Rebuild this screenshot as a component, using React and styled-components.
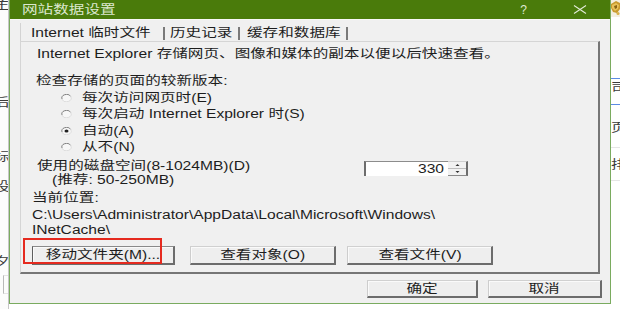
import React from "react";
import styled, { createGlobalStyle } from "styled-components";

const SX = 1.3;

const GlobalStyle = createGlobalStyle`
  html, body { margin: 0; padding: 0; background: #ffffff; }
  body {
    font-family: "Liberation Sans", "Noto Sans CJK SC", sans-serif;
    font-size: 12px;
    color: #1d1d1d;
  }
`;

const Screen = styled.div`
  display: flex;
  width: 620px;
  height: 309px;
  overflow: hidden;
  background: #ffffff;
`;

const Stretch = styled.span`
  display: inline-block;
  white-space: nowrap;
  line-height: 14px;
  transform: scaleX(${SX});
  transform-origin: ${(p) => p.$origin || "left"} center;
`;

/* ---------- background page edges ---------- */
const LeftStrip = styled.div`
  flex: none;
  width: 8px;
  border-right: 1px solid #c6c6c6;
  overflow: hidden;
  display: flex;
  flex-direction: column;
  background: #fcfcfc;
`;

const EdgeGlyph = styled.div`
  flex: none;
  height: 14px;
  line-height: 14px;
  font-size: 12px;
  color: #3a3a3a;
  margin-top: ${(p) => p.$mt}px;
  margin-left: ${(p) => p.$ml ?? 0}px;
  white-space: nowrap;
`;

const EdgeBox = styled.div`
  flex: none;
  margin-top: ${(p) => p.$mt}px;
  margin-left: 3px;
  height: 17px;
  border-left: 1px solid #b9b9b9;
  border-top: 1px solid #e4e4e4;
  border-bottom: 1px solid #e4e4e4;
`;

const RightStrip = styled.div`
  flex: none;
  width: 9px;
  overflow: hidden;
  display: flex;
  flex-direction: column;
  background: #ffffff;
`;

const EdgeRule = styled.div`
  flex: none;
  height: ${(p) => p.$h ?? 1}px;
  margin-top: ${(p) => p.$mt}px;
  background: ${(p) => p.$color};
`;

/* ---------- dialog ---------- */
const Dialog = styled.div`
  flex: none;
  width: 602px;
  height: 304px;
  box-sizing: border-box;
  display: flex;
  flex-direction: column;
  background: #f0f0f0;
  border: 1px solid #7aab5f;
  border-top: none;
`;

const TitleBar = styled.div`
  flex: none;
  height: 19px;
  display: flex;
  align-items: center;
  padding: 0 23px 0 12px;
  background: #4a7b0b;
  color: #dce8cf;
  font-size: 12px;
`;

const TitleSpacer = styled.div`
  flex: 1;
`;

const HelpMark = styled.span`
  font-size: 12px;
  color: #dfe9d3;
  margin-right: 46px;
`;

const Body = styled.div`
  flex: 1;
  display: flex;
  flex-direction: column;
  padding: 3px 10px 0 10px;
  border-top: 1px solid #f8f8f8;
`;

const TabRow = styled.div`
  flex: none;
  height: 18px;
  display: flex;
  align-items: flex-end;
`;

const Tab = styled.div`
  box-sizing: border-box;
  width: ${(p) => p.$w}px;
  height: 18px;
  padding: 2px 0 0 ${(p) => p.$pl}px;
  display: flex;
  align-items: center;
  border-left: ${(p) => (p.$active ? "1px solid #d3d3d3" : "none")};
`;

const TabSep = styled.div`
  flex: none;
  width: 2px;
  height: 13px;
  margin-bottom: 1px;
  background: #7a7a7a;
`;

const Panel = styled.div`
  position: relative;
  flex: none;
  height: 233px;
  box-sizing: border-box;
  display: flex;
  flex-direction: column;
  border-top: 1px solid #d5d5d5;
  border-left: 1px solid #d5d5d5;
  border-right: 2px solid #767676;
  border-bottom: 2px solid #767676;
`;

const Line = styled.div`
  flex: none;
  display: flex;
  align-items: center;
  gap: ${(p) => p.$gap ?? 0}px;
  height: ${(p) => p.$h ?? 16}px;
  margin-top: ${(p) => p.$mt ?? 0}px;
  padding-left: ${(p) => p.$pl ?? 0}px;
`;

const DiskRow = styled.div`
  flex: none;
  display: flex;
  align-items: flex-start;
  margin-top: 4px;
  padding-left: 16px;
`;

const DiskLabels = styled.div`
  width: 327px;
  display: flex;
  flex-direction: column;
`;

const SpinBox = styled.div`
  display: flex;
  margin-top: 2px;
`;

const SpinInput = styled.div`
  box-sizing: border-box;
  width: 84px;
  height: 15px;
  display: flex;
  align-items: center;
  justify-content: flex-end;
  padding-right: 4px;
  background: #ffffff;
  border-left: 2px solid #6d6d6d;
  border-top: 1px solid #8c8c8c;
  font-size: 12px;
`;

const Spinner = styled.div`
  box-sizing: border-box;
  width: 20px;
  height: 15px;
  display: flex;
  flex-direction: column;
  background: #f2f2f2;
  border-top: 1px solid #d0d0d0;
  border-right: 2px solid #6d6d6d;
  border-bottom: 1px solid #8a8a8a;
`;

const SpinHalf = styled.div`
  flex: 1;
  display: flex;
  align-items: center;
  justify-content: center;
  border-bottom: ${(p) => (p.$top ? "1px solid #bdbdbd" : "none")};
`;

const PathBlock = styled.div`
  flex: none;
  margin-top: 2px;
  padding-left: 11px;
  display: flex;
  flex-direction: column;
`;

const PathLine = styled.div`
  height: 15px;
  display: flex;
  align-items: center;
`;

const Btn = styled.div`
  flex: none;
  box-sizing: border-box;
  width: ${(p) => p.$w}px;
  height: ${(p) => p.$h ?? 19}px;
  margin-left: ${(p) => p.$ml ?? 0}px;
  display: flex;
  align-items: center;
  justify-content: center;
  background: #eeeeee;
  border-top: 1px solid ${(p) => (p.$focus ? "#8a8a8a" : "#d0d0d0")};
  border-left: 1px solid ${(p) => (p.$focus ? "#5e5e5e" : "#cdcdcd")};
  border-right: 2px solid #6c6c6c;
  border-bottom: 2px solid #6c6c6c;
  box-shadow: inset 1px 1px 0 #fafafa;
  font-size: 12px;
`;

const Highlight = styled.div`
  position: absolute;
  left: 2px;
  top: 196px;
  width: 139px;
  height: 26px;
  box-sizing: border-box;
  border: 2px solid #e52a1f;
  pointer-events: none;
`;

const Footer = styled.div`
  flex: none;
  display: flex;
  justify-content: flex-end;
  gap: 10px;
  margin-top: 6px;
  margin-right: -2px;
`;

const Radio = ({ checked }) => (
  <svg width="11" height="8" viewBox="0 0 11 8" style={{ flex: "none" }}>
    <ellipse cx="5.5" cy="4" rx="4.6" ry="3.3" fill="#f7f7f7" />
    <path d="M1.2 5.2 A4.6 3.3 0 0 1 9.6 2.4" fill="none" stroke="#7f7f7f" strokeWidth="1" />
    <path d="M9.8 2.9 A4.6 3.3 0 0 1 1.4 5.8" fill="none" stroke="#dcdcdc" strokeWidth="1" />
    {checked && <ellipse cx="5.5" cy="4" rx="2" ry="1.5" fill="#222" />}
  </svg>
);

const CloseIcon = () => (
  <svg width="14" height="9" viewBox="0 0 14 9">
    <path d="M1 0.5 L13 8.5 M13 0.5 L1 8.5" stroke="#e2ead8" strokeWidth="1.1" fill="none" />
  </svg>
);

const Arrow = ({ down }) => (
  <svg width="7" height="4" viewBox="0 0 7 4">
    {down ? <path d="M1.5 1 L5.5 1 L3.5 3 Z" fill="#333" /> : <path d="M1.5 3 L5.5 3 L3.5 1 Z" fill="#333" />}
  </svg>
);

const GoldThumb = () => (
  <svg width="9" height="17" viewBox="0 0 9 17">
    <rect width="9" height="17" fill="#f4efe2" />
    <path d="M0 4 L5 1 L9 3 L9 9 L6 13 L2 12 L0 8 Z" fill="#c99a2e" />
    <path d="M1 5 L5 3 L8 5 L7 9 L4 11 L1 8 Z" fill="#e8c25a" />
    <path d="M3 6 L6 5 L6 8 L4 9 Z" fill="#8a6414" />
    <circle cx="7" cy="13.5" r="1.5" fill="#d8b04a" />
  </svg>
);

export default function App() {
  return (
    <>
      <GlobalStyle />
      <Screen>
        <LeftStrip>
          <EdgeGlyph $mt={-2} $ml={-6}><Stretch>主</Stretch></EdgeGlyph>
          <EdgeGlyph $mt={84} $ml={-6}><Stretch>后</Stretch></EdgeGlyph>
          <EdgeGlyph $mt={40} $ml={-6}><Stretch>标</Stretch></EdgeGlyph>
          <EdgeGlyph $mt={16} $ml={-6}><Stretch>设</Stretch></EdgeGlyph>
          <EdgeGlyph $mt={61} $ml={-6}><Stretch>夕</Stretch></EdgeGlyph>
          <EdgeBox $mt={6} />
        </LeftStrip>

        <Dialog>
          <TitleBar>
            <Stretch>网站数据设置</Stretch>
            <TitleSpacer />
            <HelpMark>?</HelpMark>
            <CloseIcon />
          </TitleBar>

          <Body>
            <TabRow>
              <Tab $w={143} $pl={10} $active><Stretch>Internet 临时文件</Stretch></Tab>
              <TabSep />
              <Tab $w={73} $pl={5}><Stretch>历史记录</Stretch></Tab>
              <TabSep />
              <Tab $w={106} $pl={7}><Stretch>缓存和数据库</Stretch></Tab>
              <TabSep />
            </TabRow>

            <Panel>
              <Line $mt={4} $pl={16}>
                <Stretch>Internet Explorer 存储网页、图像和媒体的副本以便以后快速查看。</Stretch>
              </Line>
              <Line $mt={11} $pl={15}>
                <Stretch>检查存储的页面的较新版本:</Stretch>
              </Line>
              <Line $mt={1} $pl={40} $gap={10}>
                <Radio /><Stretch>每次访问网页时(E)</Stretch>
              </Line>
              <Line $mt={0} $pl={40} $gap={10}>
                <Radio /><Stretch>每次启动 Internet Explorer 时(S)</Stretch>
              </Line>
              <Line $mt={1} $pl={40} $gap={10}>
                <Radio checked /><Stretch>自动(A)</Stretch>
              </Line>
              <Line $mt={0} $pl={40} $gap={10}>
                <Radio /><Stretch>从不(N)</Stretch>
              </Line>

              <DiskRow>
                <DiskLabels>
                  <Line $h={14}><Stretch>使用的磁盘空间(8-1024MB)(D)</Stretch></Line>
                  <Line $h={14} $pl={15}><Stretch>(推荐: 50-250MB)</Stretch></Line>
                </DiskLabels>
                <SpinBox>
                  <SpinInput><Stretch $origin="right">330</Stretch></SpinInput>
                  <Spinner>
                    <SpinHalf $top><Arrow /></SpinHalf>
                    <SpinHalf><Arrow down /></SpinHalf>
                  </Spinner>
                </SpinBox>
              </DiskRow>

              <Line $h={14} $mt={4} $pl={11}>
                <Stretch>当前位置:</Stretch>
              </Line>
              <PathBlock>
                <PathLine><Stretch>C:\Users\Administrator\AppData\Local\Microsoft\Windows\</Stretch></PathLine>
                <PathLine><Stretch>INetCache\</Stretch></PathLine>
              </PathBlock>

              <Line $h={19} $mt={9} $pl={11}>
                <Btn $w={143} $focus><Stretch $origin="center">移动文件夹(M)...</Stretch></Btn>
                <Btn $w={146} $ml={15}><Stretch $origin="center">查看对象(O)</Stretch></Btn>
                <Btn $w={146} $ml={11}><Stretch $origin="center">查看文件(V)</Stretch></Btn>
              </Line>

              <Highlight />
            </Panel>

            <Footer>
              <Btn $w={111} $h={18}><Stretch $origin="center">确定</Stretch></Btn>
              <Btn $w={114} $h={18}><Stretch $origin="center">取消</Stretch></Btn>
            </Footer>
          </Body>
        </Dialog>

        <RightStrip>
          <GoldThumb />
          <EdgeRule $mt={61} $color="#5b8be4" />
          <EdgeGlyph $mt={2}><Stretch>司</Stretch></EdgeGlyph>
          <EdgeRule $mt={9} $color="#5b8be4" />
          <EdgeGlyph $mt={16}><Stretch>页</Stretch></EdgeGlyph>
          <EdgeRule $mt={12} $color="#e6e6e6" />
          <EdgeGlyph $mt={10}><Stretch>排</Stretch></EdgeGlyph>
          <EdgeRule $mt={8} $color="#e6e6e6" />
        </RightStrip>
      </Screen>
    </>
  );
}
